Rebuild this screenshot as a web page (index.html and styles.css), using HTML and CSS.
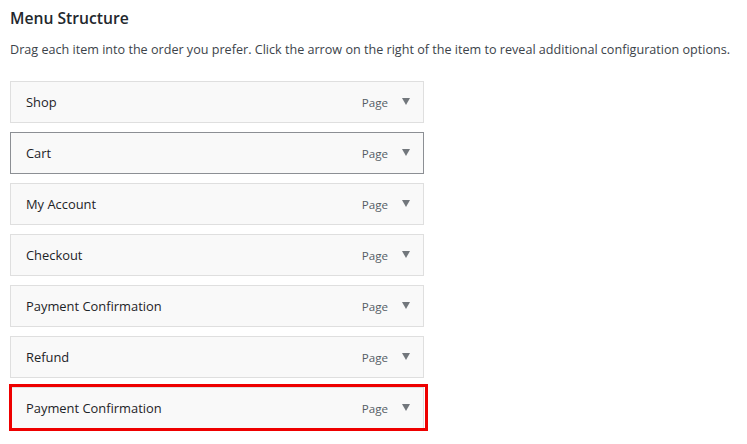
FILE: index.html
```html
<!DOCTYPE html>
<html lang="en">
<head>
  <meta charset="UTF-8" />
  <title>Menu Structure</title>
  <link rel="stylesheet" href="styles.css">
</head>
<body>
  <div class="menu-wrap">
    <h2>Menu Structure</h2>
    <p class="hint">Drag each item into the order you prefer. Click the arrow on the right of the item to reveal additional configuration options.</p>

    <ul class="menu-list">
      <li class="menu-item"><span class="title">Shop</span><span class="type">Page</span><span class="arrow"></span></li>
      <li class="menu-item active"><span class="title">Cart</span><span class="type">Page</span><span class="arrow"></span></li>
      <li class="menu-item"><span class="title">My Account</span><span class="type">Page</span><span class="arrow"></span></li>
      <li class="menu-item"><span class="title">Checkout</span><span class="type">Page</span><span class="arrow"></span></li>
      <li class="menu-item"><span class="title">Payment Confirmation</span><span class="type">Page</span><span class="arrow"></span></li>
      <li class="menu-item"><span class="title">Refund</span><span class="type">Page</span><span class="arrow"></span></li>
      <li class="menu-item highlight"><span class="title">Payment Confirmation</span><span class="type">Page</span><span class="arrow"></span></li>
    </ul>
  </div>
</body>
</html>
```

FILE: styles.css
```css
* {
  margin: 0;
  padding: 0;
  box-sizing: border-box;
}

body {
  font-family: 'Open Sans', 'Noto Sans', sans-serif;
  background: #fff;
  color: #3c434a;
  padding: 8px 10px;
}

h2 {
  font-size: 15.7px;
  font-weight: 600;
  color: #23282d;
  line-height: 20px;
}

.hint {
  font-size: 12.6px;
  line-height: 18px;
  margin-top: 13px;
  color: #3c434a;
  white-space: nowrap;
}

.menu-list {
  list-style: none;
  margin-top: 22px;
  width: 414px;
  display: flex;
  flex-direction: column;
  gap: 9px;
}

.menu-item {
  position: relative;
  display: flex;
  align-items: center;
  height: 42px;
  padding: 0 13px 0 15px;
  background: #f9f9f9;
  border: 1px solid #dfdfdf;
}

.menu-item.active {
  border-color: #8c8f94;
}

.menu-item .title {
  flex: 1;
  font-size: 12.9px;
  color: #1d2327;
}

.menu-item .type {
  font-size: 11.6px;
  color: #555d66;
  margin-right: 14px;
  margin-top: 1px;
}

.menu-item .arrow {
  width: 0;
  height: 0;
  border-left: 4.5px solid transparent;
  border-right: 4.5px solid transparent;
  border-top: 7px solid #72777c;
  margin-top: -1px;
}

.highlight::after {
  content: "";
  position: absolute;
  left: -2px;
  top: -4px;
  right: -5px;
  bottom: -3px;
  border: 3px solid #ee0000;
}
```
